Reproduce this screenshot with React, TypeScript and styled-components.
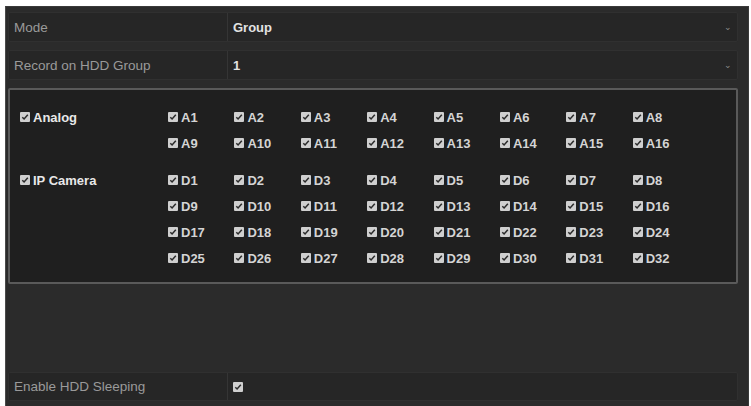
import styled, { createGlobalStyle } from "styled-components";

const GlobalStyle = createGlobalStyle`
  html, body {
    margin: 0;
    padding: 0;
    background: #ffffff;
  }
  body {
    font-family: "Liberation Sans", Arial, sans-serif;
  }
`;

const Panel = styled.div`
  margin: 6px 2px 0 5px;
  height: 400px;
  box-sizing: border-box;
  background: #2b2b2b;
  border-left: 1px solid #4a4a4a;
  border-top: 1px solid #3a3a3a;
  border-right: 1px solid #3a3a3a;
  padding: 5px 10px 0 2px;
  display: flex;
  flex-direction: column;
`;

const Row = styled.div<{ $mt?: number }>`
  display: flex;
  height: 30px;
  margin-top: ${(p) => p.$mt ?? 0}px;
  background: #262626;
  border: 1px solid #303030;
  border-radius: 2px;
  box-sizing: border-box;
`;

const LabelCell = styled.div`
  width: 219px;
  box-sizing: border-box;
  display: flex;
  align-items: center;
  padding-left: 5px;
  font-size: 13.5px;
  color: #9a9a9a;
  border-right: 1px solid #353535;
`;

const ValueCell = styled.div`
  flex: 1;
  display: flex;
  align-items: center;
  padding: 0 5px 0 5px;
  font-size: 13px;
  font-weight: bold;
  color: #e2e2e2;
`;

const Chevron = styled.span`
  margin-left: auto;
  color: #8a8a8a;
  font-size: 9px;
  font-weight: normal;
`;

const GroupBox = styled.div`
  margin-top: 8px;
  height: 196px;
  box-sizing: border-box;
  background: #1f1f1f;
  border: 2px solid #5a5a5a;
  border-radius: 2px;
  padding: 14px 0 0 10px;
  display: flex;
  flex-direction: column;
  gap: 11px;
`;

const ChannelGrid = styled.div`
  display: grid;
  grid-template-columns: 148px repeat(8, 66.4px);
  grid-auto-rows: 26px;
`;

const Item = styled.div<{ $group?: boolean }>`
  display: flex;
  align-items: center;
  gap: 3px;
  font-size: 13px;
  font-weight: bold;
  color: ${(p) => (p.$group ? "#e8e8e8" : "#d4d4d4")};
`;

const Box = styled.span`
  width: 10px;
  height: 10px;
  background: #cfcfcf;
  border-radius: 1px;
  display: inline-flex;
  align-items: center;
  justify-content: center;
  flex-shrink: 0;
`;

const Spacer = styled.div`
  flex: 1;
`;

const BottomRow = styled(Row)`
  height: 29px;
  margin-bottom: 5px;
`;

function Check() {
  return (
    <Box>
      <svg width="8" height="8" viewBox="0 0 8 8">
        <path d="M1.3 4.2 L3.1 6 L6.8 1.8" fill="none" stroke="#2a2a2a" strokeWidth="1.5" />
      </svg>
    </Box>
  );
}

function Channel({ name, group }: { name: string; group?: boolean }) {
  return (
    <Item $group={group}>
      <Check />
      {name}
    </Item>
  );
}

function Group({ title, prefix, count }: { title: string; prefix: string; count: number }) {
  const cells = [];
  for (let i = 0; i < count; i++) {
    if (i % 8 === 0) {
      cells.push(
        i === 0 ? <Channel key={"t" + i} name={title} group /> : <div key={"t" + i} />
      );
    }
    cells.push(<Channel key={i} name={prefix + (i + 1)} />);
  }
  return <ChannelGrid>{cells}</ChannelGrid>;
}

export default function App() {
  return (
    <>
      <GlobalStyle />
      <Panel>
        <Row>
          <LabelCell>Mode</LabelCell>
          <ValueCell>
            Group
            <Chevron>⌄</Chevron>
          </ValueCell>
        </Row>
        <Row $mt={8}>
          <LabelCell>Record on HDD Group</LabelCell>
          <ValueCell>
            1
            <Chevron>⌄</Chevron>
          </ValueCell>
        </Row>
        <GroupBox>
          <Group title="Analog" prefix="A" count={16} />
          <Group title="IP Camera" prefix="D" count={32} />
        </GroupBox>
        <Spacer />
        <BottomRow>
          <LabelCell>Enable HDD Sleeping</LabelCell>
          <ValueCell>
            <Check />
          </ValueCell>
        </BottomRow>
      </Panel>
    </>
  );
}
